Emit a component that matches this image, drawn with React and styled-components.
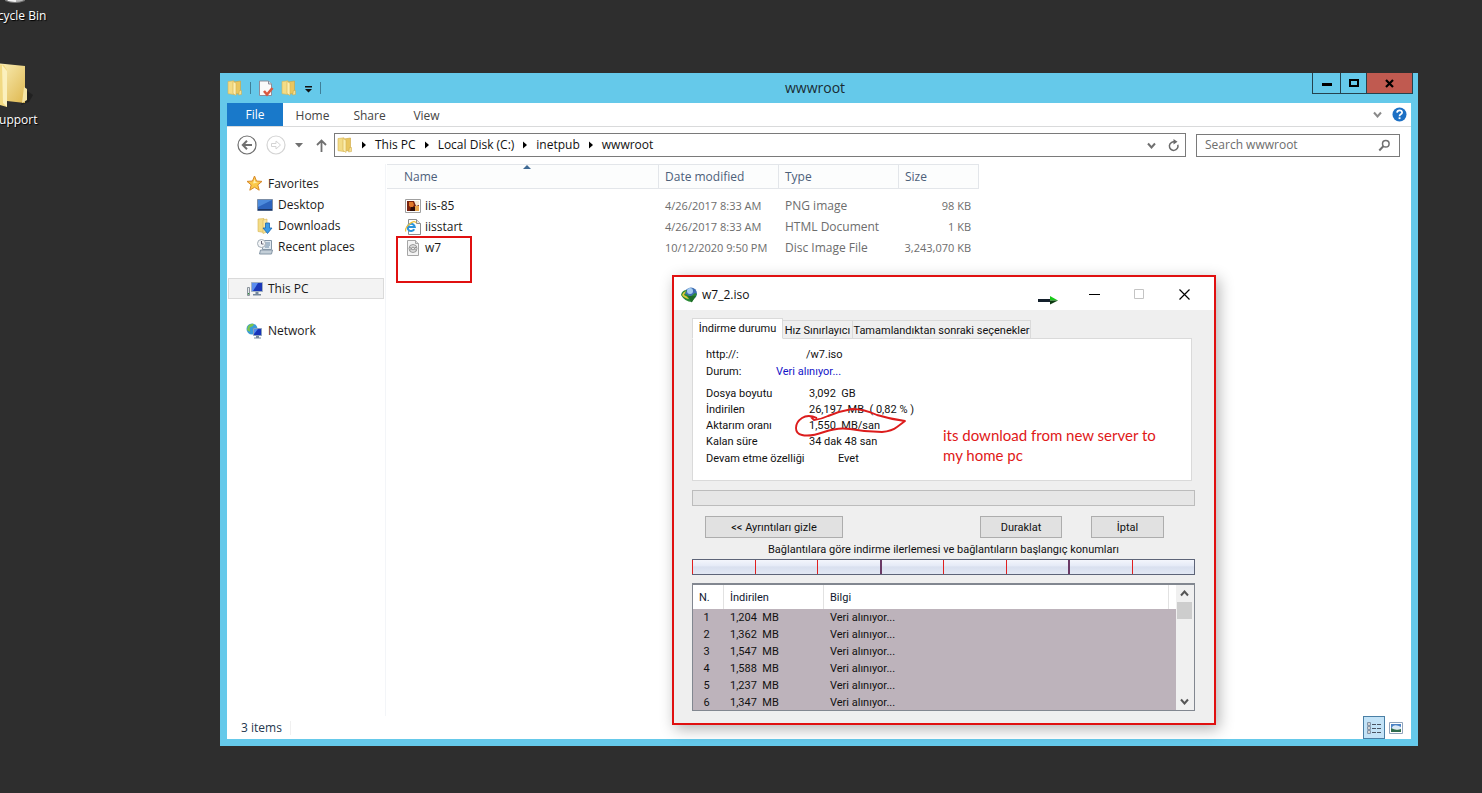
import React from "react";
import styled, { createGlobalStyle } from "styled-components";

const GlobalStyle = createGlobalStyle`
  * { box-sizing: border-box; }
  body { margin: 0; background: #2e2e2e; }
  button, input { font: inherit; color: inherit; }
  button { padding: 0; border: 0; background: none; }
  svg { display: block; flex: none; }
`;

const uiFont = `"Open Sans", "Noto Sans", sans-serif`;

/* ---------- desktop ---------- */

const Desktop = styled.main`
  position: relative;
  display: flex;
  min-height: 100vh;
  padding: 73px 64px 47px 220px;
  overflow: hidden;
  background: #2e2e2e;
  font: 12px/20px ${uiFont};
`;

const Shortcut = styled.div`
  position: absolute;
  left: -25px;
  top: ${(p) => p.$top}px;
  width: 80px;
  display: flex;
  flex-direction: column;
  align-items: center;
  color: #fff;
  white-space: nowrap;
  text-shadow: 1px 1px 1px #000;
`;

/* ---------- explorer ---------- */

const Explorer = styled.section`
  flex: 1;
  min-width: 0;
  display: flex;
  flex-direction: column;
  padding: 0 7px 7px;
  background: #65c9ea;
`;

const TitleBar = styled.header`
  display: grid;
  grid-template-columns: 1fr auto 1fr;
  height: 30px;
`;

const QuickTools = styled.div`
  display: flex;
  align-items: center;
  gap: 7px;
`;

const ToolButton = styled.button`
  display: flex;
  align-items: center;
  justify-content: center;
  height: 20px;
`;

const Divider = styled.span`
  width: 1px;
  height: 12px;
  background: #3f7f98;
`;

const WindowTitle = styled.h1`
  margin: 0;
  padding-right: 8px;
  font-size: 14px;
  font-weight: 400;
  line-height: 30px;
  color: #1a2c33;
`;

const Captions = styled.div`
  display: flex;
  justify-content: flex-end;
  margin-right: -2px;
`;

const Caption = styled.button`
  width: ${(p) => p.$width}px;
  height: 21px;
  margin-left: -1px;
  display: flex;
  align-items: center;
  justify-content: center;
  border: 1px solid #24424e;
  border-top: 0;
  background: ${(p) => (p.$close ? "#c05a50" : "transparent")};
`;

const Client = styled.div`
  flex: 1;
  display: flex;
  flex-direction: column;
  background: #fff;
`;

const Ribbon = styled.nav`
  display: flex;
  align-items: center;
  height: 24px;
  border-bottom: 1px solid #d9dadb;
`;

const RibbonTab = styled.button`
  width: ${(p) => (p.$file ? 56 : 57)}px;
  height: 23px;
  margin-right: ${(p) => (p.$file ? 1 : 0)}px;
  line-height: ${(p) => (p.$file ? 24 : 26)}px;
  color: ${(p) => (p.$file ? "#fff" : "#444")};
  background: ${(p) => (p.$file ? "#1979ca" : "transparent")};
`;

const RibbonEnd = styled.div`
  display: flex;
  align-items: center;
  gap: 10px;
  margin: 0 4px 0 auto;
`;

const AddressRow = styled.div`
  display: flex;
  align-items: center;
  height: 37px;
  padding: 0 11px 1px 10px;
`;

const NavButtons = styled.div`
  display: flex;
  align-items: center;
  gap: 9px;
  width: 90px;
  margin-right: 7px;

  & > :last-child { margin-left: auto; }
`;

const AddressBar = styled.div`
  flex: 1;
  display: flex;
  align-items: center;
  gap: 8px;
  height: 24px;
  padding: 0 5px 0 2px;
  border: 1px solid #7a7a7a;
  color: #111;
`;

const AddressEnd = styled.div`
  display: flex;
  align-items: center;
  gap: 11px;
  margin-left: auto;
`;

const SearchBox = styled.label`
  display: flex;
  align-items: center;
  width: 204px;
  height: 23px;
  margin-left: 10px;
  padding: 0 8px;
  border: 1px solid #7a7a7a;
`;

const SearchInput = styled.input`
  flex: 1;
  min-width: 0;
  padding: 0;
  border: 0;
  outline: 0;
  background: none;
  &::placeholder { color: #6d6d6d; opacity: 1; }
`;

const Body = styled.div`
  flex: 1;
  display: flex;
`;

const NavPane = styled.nav`
  width: 159px;
  padding: 9px 1px 0;
  border-right: 1px solid #f3f5f8;
`;

const NavItem = styled.a`
  display: flex;
  align-items: center;
  gap: 5px;
  height: 21px;
  margin-bottom: ${(p) => (p.$gap ? 21 : 0)}px;
  padding-left: ${(p) => (p.$child ? 29 : 18)}px;
  color: #1a1a1a;
  text-decoration: none;
  white-space: nowrap;
  background: ${(p) => (p.$selected ? "#f3f3f3" : "transparent")};
  box-shadow: ${(p) => (p.$selected ? "inset 0 0 0 1px #dadada" : "none")};
`;

const FileTable = styled.table`
  width: 592px;
  table-layout: fixed;
  border-collapse: separate;
  border-spacing: 0;
  align-self: flex-start;
  margin-left: 1px;
`;

const HeadCell = styled.th`
  position: relative;
  width: ${(p) => p.$width}px;
  height: 25px;
  padding: 0 0 0 ${(p) => p.$indent || 6}px;
  border: solid #e3e6ea;
  border-width: 1px 1px 1px 0;
  background: #fcfdfd;
  color: #4c607a;
  font-weight: 400;
  text-align: left;
`;

const SortMark = styled.svg`
  position: absolute;
  left: 50%;
  top: 0;
`;

const FileCell = styled.td`
  height: 21px;
  padding: 0 ${(p) => (p.$right ? 8 : 0)}px 0 ${(p) => (p.$right ? 0 : 6)}px;
  color: #6d6d6d;
  font-size: ${(p) => (p.$figures ? 11 : 12)}px;
  text-align: ${(p) => (p.$right ? "right" : "left")};
  white-space: nowrap;
`;

const Spacer = styled.td`
  height: 6px;
  padding: 0;
`;

const FileName = styled.a`
  display: flex;
  align-items: center;
  gap: 4px;
  padding-left: 12px;
  color: #1a1a1a;
  text-decoration: none;
`;

const StatusBar = styled.footer`
  display: flex;
  align-items: center;
  justify-content: space-between;
  height: 23px;
  padding: 0 8px 0 14px;
  color: #24384f;
`;

const ItemCount = styled.span`
  padding-right: 8px;
  line-height: 14px;
  border-right: 1px solid #f0f0f0;
`;

const ViewButtons = styled.div`
  display: flex;
  align-items: center;
  gap: 4px;
`;

const ViewButton = styled.button`
  display: flex;
  align-items: center;
  justify-content: center;
  width: ${(p) => (p.$on ? 22 : 14)}px;
  height: 23px;
  border: ${(p) => (p.$on ? "1px solid #4a7fa5" : "0")};
  background: ${(p) => (p.$on ? "#c3e3f7" : "transparent")};
`;

/* ---------- download dialog ---------- */

const Dialog = styled.section`
  position: absolute;
  left: 672px;
  top: 275px;
  width: 544px;
  border: 2px solid #e01010;
  background: #efefef;
  box-shadow: 3px 4px 14px rgba(0, 0, 0, 0.3);
  font: 11px/16px Roboto, "Noto Sans", sans-serif;
  color: #111;
`;

const DialogTitle = styled.header`
  display: flex;
  align-items: center;
  gap: 4px;
  height: 33px;
  padding: 2px 24px 0 7px;
  background: #fff;
  font: 12px/20px ${uiFont};
`;

const DialogName = styled.span`
  margin-right: auto;
`;

const DialogCaptions = styled.div`
  display: flex;
  align-items: center;
  gap: 34px;
  margin-left: 24px;
`;

const DialogBody = styled.div`
  padding: 8px 19px 12px 18px;
`;

const Tabs = styled.div`
  display: flex;
  align-items: flex-end;
  height: 21px;
  margin-bottom: -1px;
`;

const Tab = styled.button`
  width: ${(p) => p.$width}px;
  height: ${(p) => (p.$active ? 21 : 19)}px;
  padding-top: ${(p) => (p.$active ? 0 : 2)}px;
  border: 1px solid #dadada;
  border-bottom-color: ${(p) => (p.$active ? "#fff" : "#dadada")};
  border-left-width: ${(p) => (p.$active ? 1 : 0)}px;
  background: ${(p) => (p.$active ? "#fff" : "#efefef")};
  white-space: nowrap;
`;

const Panel = styled.div`
  display: flex;
  flex-direction: column;
  height: 143px;
  margin-right: 3px;
  padding: 7px 13px;
  border: 1px solid #dadada;
  background: #fff;
`;

const Info = styled.div`
  display: flex;
  align-items: center;
  height: ${(p) => (p.$tall ? 17 : 16)}px;
  margin-bottom: ${(p) => (p.$last ? 6 : 0)}px;
  white-space: pre;
`;

const InfoLabel = styled.span`
  width: ${(p) => p.$width || 103}px;
`;

const Status = styled.span`
  color: #1414c8;
`;

const Progress = styled.div`
  height: 16px;
  margin-top: 9px;
  border: 1px solid #bcbcbc;
  background: #e6e6e6;
`;

const Actions = styled.div`
  display: flex;
  margin: 10px 31px 0 13px;
`;

const Action = styled.button`
  width: ${(p) => p.$width}px;
  height: 22px;
  margin-left: ${(p) => p.$before || 0}px;
  padding-top: 2px;
  border: 1px solid #adadad;
  background: #e1e1e1;
`;

const SegmentTitle = styled.p`
  margin: 4px 0 1px;
  text-align: center;
`;

const Segments = styled.div`
  display: flex;
  height: 16px;
  border: 1px solid #5d6478;
  border-left: 0;
  background: linear-gradient(#f4f6fc, #e6ebf7 40%, #d9e0ef 50%, #e2e8f4);
`;

const Segment = styled.span`
  flex: 1;
  border-left: ${(p) => (p.$joined ? "2px solid #6b3a66" : "1px solid #e02020")};
`;

const ListBox = styled.div`
  display: flex;
  height: 128px;
  margin-top: 8px;
  border: 1px solid #828790;
  border-top-width: 2px;
  overflow: hidden;
  background: #fff;
`;

const ListView = styled.div`
  flex: 1;
  overflow: hidden;
`;

const ListTable = styled.table`
  width: 100%;
  table-layout: fixed;
  border-spacing: 0;
  background: #bdb3bb;
`;

const ListHead = styled.th`
  width: ${(p) => (p.$width ? p.$width + "px" : "auto")};
  height: 24px;
  padding: 2px 0 0 6px;
  border-right: ${(p) => (p.$end ? "0" : "1px solid #e2e2e2")};
  background: #fff;
  color: #101830;
  font-weight: 400;
  text-align: left;
`;

const ListCell = styled.td`
  height: 17px;
  padding: 1px 0 0 6px;
  white-space: pre;
`;

const NumberCell = styled(ListCell)`
  padding: 1px 4px 0 0;
  text-align: center;
`;

const ScrollBar = styled.div`
  display: flex;
  flex-direction: column;
  width: 18px;
  padding: 0 2px 0 1px;
  background: #f0f0f0;
`;

const ScrollButton = styled.button`
  display: flex;
  align-items: center;
  justify-content: center;
  height: 17px;
`;

const Thumb = styled.div`
  height: 17px;
  margin-bottom: auto;
  background: #cdcdcd;
`;

/* ---------- annotations ---------- */

const MarkBox = styled.div`
  position: absolute;
  left: 396px;
  top: 236px;
  width: 76px;
  height: 47px;
  border: 2px solid #e01010;
`;

const Scribble = styled.svg`
  position: absolute;
  left: 120px;
  top: 130px;
`;

const Note = styled.p`
  position: absolute;
  left: 269px;
  top: 148px;
  width: 230px;
  margin: 0;
  color: #e01818;
  font: 15px/20px Lato, sans-serif;
`;

/* ---------- icons ---------- */

const Folder = ({ size = 16 }) => (
  <svg width={size} height={size} viewBox="0 0 16 16">
    <path d="M1 1.500l6-.7v13.700l-6-.8z" fill="#f3dc86" stroke="#d6b452" strokeWidth=".6" />
    <path d="M7 2l6.500-1v12.500L7 14z" fill="#e9c65e" stroke="#cda63f" strokeWidth=".6" />
    <path d="M6 1.500l3 1.500v12.500l-3-2z" fill="#fbeeb0" stroke="#d6b452" strokeWidth=".6" />
    <path d="M12.500 10.500h2v4l-3 .5z" fill="#f4de93" stroke="#cda63f" strokeWidth=".5" />
  </svg>
);

const BigFolder = () => (
  <svg width="52" height="48" viewBox="13 0 52 48">
    <defs>
      <linearGradient id="fold" x1="0" y1="0" x2="1" y2="1">
        <stop offset="0" stopColor="#fbf1bd" />
        <stop offset="1" stopColor="#dfb84f" />
      </linearGradient>
    </defs>
    <path d="M50 28l7 5-4 7-8 3z" fill="#1c1c1c" opacity=".7" />
    <path d="M20 1l29 3v37l-18-2z" fill="url(#fold)" />
    <path d="M10 1l18 2 3 5v37L14 40z" fill="#f1d982" />
    <path d="M26 3l5 6v36l-4-4z" fill="#fbf0bd" />
    <path d="M48 25l3 2v11l-5 3z" fill="#f5e5a5" />
  </svg>
);

const Bin = () => (
  <svg width="30" height="12" viewBox="0 0 30 12">
    <path d="M3 0h24l-2 6q-10 5-20 0z" fill="#b9b9b9" />
    <path d="M8 0h8v8q-5 0-8-1z" fill="#f1f1f1" />
    <path d="M5 6q10 4 20 0v1q-10 4-20 0z" fill="#777" />
  </svg>
);

const Properties = () => (
  <svg width="16" height="17" viewBox="0 0 16 17">
    <path d="M1.500 1h9l3 3v11.500h-12z" fill="#fafafa" stroke="#8d8d9a" />
    <path d="M10.500 1v3h3" fill="#ddd" stroke="#8d8d9a" />
    <path d="M6 11l3 3.500L14.500 8" fill="none" stroke="#d9583f" strokeWidth="2.600" />
  </svg>
);

const Chevron = ({ up, color = "#555", w = 9 }) => (
  <svg width={w} height="7" viewBox="0 0 9 7">
    <path d={up ? "M1 5.500l3.500-4 3.500 4" : "M1 1.500l3.500 4 3.500-4"} fill="none" stroke={color} strokeWidth="2" />
  </svg>
);

const Crumb = () => (
  <svg width="6" height="8" viewBox="0 0 6 8">
    <path d="M1 .5v7L5 4z" fill="#000" />
  </svg>
);

const RoundArrow = ({ forward }) => {
  const c = forward ? "#d4d4d4" : "#707070";
  return (
    <svg width="20" height="20" viewBox="0 0 20 20">
      <circle cx="10" cy="10" r="9" fill="#fff" stroke={c} strokeWidth="1.200" />
      {forward ? (
        <path d="M5.500 8.500H10V6l4.500 4-4.500 4v-2.500H5.500z" fill="none" stroke={c} />
      ) : (
        <path d="M15 10H6m4-4.200L5.800 10l4.200 4.200" fill="none" stroke={c} strokeWidth="2" />
      )}
    </svg>
  );
};

const UpArrow = () => (
  <svg width="11" height="13" viewBox="0 0 11 13">
    <path d="M5.500 13V2M1 6l4.500-4.500L10 6" fill="none" stroke="#707070" strokeWidth="1.800" />
  </svg>
);

const Help = () => (
  <svg width="15" height="15" viewBox="0 0 15 15">
    <circle cx="7.500" cy="7.500" r="7" fill="#1d70c4" />
    <path d="M5 5.600q.2-2.300 2.600-2.300t2.500 2.100q0 1.100-1.300 1.900T7.500 9.200" fill="none" stroke="#fff" strokeWidth="1.700" />
    <path d="M6.600 10.300h1.900v1.800H6.600z" fill="#fff" />
  </svg>
);

const Refresh = () => (
  <svg width="13" height="13" viewBox="0 0 13 13">
    <path d="M10.800 5.800A4.300 4.300 0 1 1 8 3" fill="none" stroke="#6a6a6a" strokeWidth="1.500" />
    <path d="M6.500 0l4 2.800-4 2.700z" fill="#6a6a6a" />
  </svg>
);

const Magnifier = () => (
  <svg width="13" height="13" viewBox="0 0 13 13">
    <circle cx="7.800" cy="4.800" r="3.300" fill="none" stroke="#707070" strokeWidth="1.500" />
    <path d="M5.300 7.300L1.300 11.500" stroke="#707070" strokeWidth="2" />
  </svg>
);

const Star = () => (
  <svg width="17" height="17" viewBox="0 0 17 17">
    <path d="M8.500 1l2 5 5.500.4-4.200 3.500 1.400 5.300-4.700-2.900-4.700 2.900 1.400-5.300L1 6.400 6.500 6z" fill="#fbc94a" stroke="#d88a2a" />
    <path d="M8.500 4l1 3 2.500.5-5 1z" fill="#fff0b0" />
  </svg>
);

const DesktopIcon = () => (
  <svg width="16" height="16" viewBox="0 0 16 16">
    <path d="M.5 2.500h15v11H.5z" fill="#2d64bd" stroke="#7b8da6" />
    <path d="M1 3h14L1 10z" fill="#4d8bdc" />
    <path d="M1 12h14v1.500H1z" fill="#1b3566" />
  </svg>
);

const Downloads = () => (
  <svg width="16" height="16" viewBox="0 0 16 16">
    <path d="M1 1l6-.5v14l-6-1z" fill="#f3dc86" stroke="#d6b452" strokeWidth=".6" />
    <path d="M6 2l4-1v13l-4 1.500z" fill="#f8e69f" stroke="#d6b452" strokeWidth=".6" />
    <path d="M8.500 5h4v5H15l-4.500 5.500L6 10h2.500z" fill="#3b9be6" stroke="#1b66b0" strokeWidth=".8" />
  </svg>
);

const Recent = () => (
  <svg width="16" height="16" viewBox="0 0 16 16">
    <path d="M5.500 1.500h9v9h-9z" fill="#dfe8f0" stroke="#8596a6" />
    <path d="M8 4h5M8 6h5M8 8h4" stroke="#6f8ba6" />
    <path d="M3.500 11h12l-1 4h-12z" fill="#c4cfd8" stroke="#8596a6" />
    <circle cx="4.500" cy="4.500" r="4" fill="#f3f5f7" stroke="#a3adb6" />
    <path d="M4.500 2v3h2" fill="none" stroke="#667" />
  </svg>
);

const Monitor = ({ network }) => (
  <svg width="17" height="16" viewBox="0 0 17 16">
    {network ? (
      <>
        <circle cx="6" cy="6" r="5.500" fill="#3a9bd9" />
        <path d="M2 3q3-3 6-2-1 3-3 3t-1 3-3 0z" fill="#7cc64c" />
        <path d="M7.500 5.500h8v7h-8z" fill="#1733b8" stroke="#8aa0bb" />
        <path d="M8 6h4l-4 5z" fill="#4f8df0" />
        <path d="M10 13h3v1.500h2v1H8v-1h2z" fill="#75889c" />
      </>
    ) : (
      <>
        <path d="M1.500 6.500h2v8h-2z" fill="#e4e7ea" stroke="#8b949c" />
        <path d="M2 12h1v1.500H2z" fill="#2f8f3a" />
        <path d="M5.500 1.500h11v9h-11z" fill="#1b38b8" stroke="#a0b0c2" />
        <path d="M6 2h6L7 10H6z" fill="#5b8df0" />
        <path d="M9.500 11h3v2H15v1.500H7V13h2.500z" fill="#75889c" />
      </>
    )}
  </svg>
);

const PngIcon = () => (
  <svg width="16" height="16" viewBox="0 0 16 16">
    <path d="M.5 1.500h15v13H.5z" fill="#fff" stroke="#a0a0a0" />
    <path d="M2 3h12v10H2z" fill="#7a2410" />
    <path d="M4 4h4l1 3-2 3-3-2z" fill="#e0782a" />
    <path d="M10 8h4v5h-4z" fill="#e8a850" />
    <path d="M9 3h5v4l-3 1z" fill="#f4ead8" />
    <path d="M6 9h4v4H5z" fill="#2c0c08" />
  </svg>
);

const IeIcon = () => (
  <svg width="16" height="16" viewBox="0 0 16 16">
    <path d="M3.500.5h8l4 4v11h-12z" fill="#fcfcfc" stroke="#8e8e8e" />
    <path d="M11.500.5v4h4" fill="#e6e6e6" stroke="#8e8e8e" />
    <path d="M9.300 10.300A3.600 3.600 0 1 1 9.800 8H3.500" fill="none" stroke="#2a93dc" strokeWidth="2" />
    <path d="M.8 12.500Q-.5 9 4.500 5T11 3.800" fill="none" stroke="#efc03a" strokeWidth="1.300" />
  </svg>
);

const DiscIcon = () => (
  <svg width="16" height="16" viewBox="0 0 16 16">
    <path d="M2.500.5h8l3 3v12h-11z" fill="#f4f4f4" stroke="#a6a6a6" />
    <path d="M10.500.5v3h3" fill="#ddd" stroke="#a6a6a6" />
    <circle cx="8" cy="8.500" r="4" fill="#dcdcdc" stroke="#9a9a9a" />
    <path d="M4.500 7.500L7 8.500l-2 2M11.500 7L9 8.500l2 2" fill="none" stroke="#888" />
    <circle cx="8" cy="8.500" r="1.300" fill="#fff" stroke="#777" strokeWidth=".7" />
  </svg>
);

const DetailsIcon = () => (
  <svg width="16" height="14" viewBox="0 0 16 14">
    <path d="M1.500 1.500h3v3h-3zM1.500 5.500h3v3h-3zM1.500 9.500h3v3h-3z" fill="#fff" stroke="#8294a8" />
    <path d="M2.500 3h1M2.500 7h1M2.500 11h1" stroke="#444" />
    <path d="M6 3.500h4M11 3.500h4M6 7.500h4M11 7.500h4M6 11.500h4M11 11.500h4" stroke="#4b5563" />
  </svg>
);

const ThumbIcon = () => (
  <svg width="14" height="12" viewBox="0 0 14 12">
    <path d="M.5.5h13v11H.5z" fill="#fff" stroke="#8fa3bb" />
    <path d="M2 2h10v4H2z" fill="#4b82c4" />
    <path d="M4 4q3-2 8 1v2H2z" fill="#dbe9f5" />
    <path d="M2 6q5 3 10 1v3H2z" fill="#2f6d4f" />
  </svg>
);

const IdmIcon = () => (
  <svg width="17" height="16" viewBox="0 0 17 16">
    <circle cx="10" cy="6.500" r="6" fill="#3f6fb4" />
    <circle cx="9" cy="4" r="3" fill="#a8cdf0" />
    <path d="M0 8Q1 3 6 3L4 7q3 0 5 3l5-4 2 1-5 8q-7 0-11-7z" fill="#2a8a35" />
    <path d="M1 8q1-3 4-4L3 8q3 1 5 4-5-1-7-4z" fill="#e3c83a" />
    <path d="M7 9h8l-4.500 6.500z" fill="#1f6d2a" />
  </svg>
);

const GreenArrow = () => (
  <svg width="23" height="22" viewBox="0 0 23 22">
    <path d="M0 15h12v3H0z" fill="#14202c" />
    <path d="M12 12l8 4.500H12z" fill="#18c818" />
    <path d="M12 16.500h8l-8 4z" fill="#0c3a10" />
  </svg>
);

/* ---------- data ---------- */

const files = [
  { name: "iis-85", date: "4/26/2017 8:33 AM", type: "PNG image", size: "98 KB", Icon: PngIcon },
  { name: "iisstart", date: "4/26/2017 8:33 AM", type: "HTML Document", size: "1 KB", Icon: IeIcon },
  { name: "w7", date: "10/12/2020 9:50 PM", type: "Disc Image File", size: "3,243,070 KB", Icon: DiscIcon },
];

const connections = ["1,204", "1,362", "1,547", "1,588", "1,237", "1,347"];
const path = ["This PC", "Local Disk (C:)", "inetpub", "wwwroot"];

/* ---------- parts ---------- */

function ExplorerWindow() {
  return (
    <Explorer>
      <TitleBar>
        <QuickTools>
          <Folder />
          <Divider />
          <ToolButton aria-label="Properties"><Properties /></ToolButton>
          <ToolButton aria-label="New folder"><Folder /></ToolButton>
          <ToolButton aria-label="Customize">
            <svg width="9" height="9" viewBox="0 0 9 9">
              <path d="M1 2h7v1.500H1zM1 5h7L4.500 8.500z" fill="#111" />
            </svg>
          </ToolButton>
          <Divider />
        </QuickTools>
        <WindowTitle>wwwroot</WindowTitle>
        <Captions>
          <Caption $width={29} aria-label="Minimize">
            <svg width="10" height="10"><path d="M0 5h10v3H0z" fill="#000" /></svg>
          </Caption>
          <Caption $width={27} aria-label="Maximize">
            <svg width="10" height="10"><path d="M1 2h8v6H1z" fill="none" stroke="#000" strokeWidth="2" /></svg>
          </Caption>
          <Caption $width={47} $close aria-label="Close">
            <svg width="9" height="9"><path d="M1 1l7 7M8 1L1 8" stroke="#000" strokeWidth="2.200" /></svg>
          </Caption>
        </Captions>
      </TitleBar>
      <Client>
        <Ribbon>
          <RibbonTab $file>File</RibbonTab>
          <RibbonTab>Home</RibbonTab>
          <RibbonTab>Share</RibbonTab>
          <RibbonTab>View</RibbonTab>
          <RibbonEnd>
            <ToolButton aria-label="Expand ribbon"><Chevron color="#8a8a8a" /></ToolButton>
            <ToolButton aria-label="Help"><Help /></ToolButton>
          </RibbonEnd>
        </Ribbon>
        <AddressRow>
          <NavButtons>
            <ToolButton aria-label="Back"><RoundArrow /></ToolButton>
            <ToolButton aria-label="Forward"><RoundArrow forward /></ToolButton>
            <ToolButton aria-label="Recent locations">
              <svg width="8" height="5"><path d="M0 0h8L4 4.500z" fill="#707070" /></svg>
            </ToolButton>
            <ToolButton aria-label="Up"><UpArrow /></ToolButton>
          </NavButtons>
          <AddressBar>
            <Folder />
            {path.map((part) => (
              <React.Fragment key={part}>
                <Crumb />
                <ToolButton>{part}</ToolButton>
              </React.Fragment>
            ))}
            <AddressEnd>
              <ToolButton aria-label="Previous locations"><Chevron color="#707070" /></ToolButton>
              <ToolButton aria-label="Refresh"><Refresh /></ToolButton>
            </AddressEnd>
          </AddressBar>
          <SearchBox>
            <SearchInput type="text" placeholder="Search wwwroot" aria-label="Search wwwroot" />
            <Magnifier />
          </SearchBox>
        </AddressRow>
        <Body>
          <NavPane>
            <NavItem href="#favorites"><Star />Favorites</NavItem>
            <NavItem href="#desktop" $child><DesktopIcon />Desktop</NavItem>
            <NavItem href="#downloads" $child><Downloads />Downloads</NavItem>
            <NavItem href="#recent" $child $gap><Recent />Recent places</NavItem>
            <NavItem href="#pc" $selected $gap><Monitor />This PC</NavItem>
            <NavItem href="#network"><Monitor network />Network</NavItem>
          </NavPane>
          <FileTable>
            <thead>
              <tr>
                <HeadCell $width={272} $indent={17}>
                  Name
                  <SortMark width="8" height="4"><path d="M0 4l4-4 4 4z" fill="#3f6a94" /></SortMark>
                </HeadCell>
                <HeadCell $width={120}>Date modified</HeadCell>
                <HeadCell $width={120}>Type</HeadCell>
                <HeadCell $width={80}>Size</HeadCell>
              </tr>
            </thead>
            <tbody>
              <tr><Spacer colSpan={4} /></tr>
              {files.map(({ name, date, type, size, Icon }) => (
                <tr key={name}>
                  <FileCell><FileName href={"#" + name}><Icon />{name}</FileName></FileCell>
                  <FileCell $figures>{date}</FileCell>
                  <FileCell>{type}</FileCell>
                  <FileCell $figures $right>{size}</FileCell>
                </tr>
              ))}
            </tbody>
          </FileTable>
        </Body>
        <StatusBar>
          <ItemCount>3 items</ItemCount>
          <ViewButtons>
            <ViewButton $on aria-label="Details"><DetailsIcon /></ViewButton>
            <ViewButton aria-label="Large icons"><ThumbIcon /></ViewButton>
          </ViewButtons>
        </StatusBar>
      </Client>
    </Explorer>
  );
}

function DownloadDialog() {
  return (
    <Dialog>
      <DialogTitle>
        <IdmIcon />
        <DialogName>w7_2.iso</DialogName>
        <GreenArrow />
        <DialogCaptions>
          <ToolButton aria-label="Minimize">
            <svg width="11" height="11"><path d="M0 5h11v1H0z" fill="#000" /></svg>
          </ToolButton>
          <ToolButton aria-label="Maximize" disabled>
            <svg width="11" height="11"><path d="M.5.5h9v9h-9z" fill="none" stroke="#c4c4c4" /></svg>
          </ToolButton>
          <ToolButton aria-label="Close">
            <svg width="11" height="11"><path d="M.5.5l10 10M10.500.5l-10 10" stroke="#000" strokeWidth="1.200" /></svg>
          </ToolButton>
        </DialogCaptions>
      </DialogTitle>
      <DialogBody>
        <Tabs>
          <Tab $width={91} $active>İndirme durumu</Tab>
          <Tab $width={70}>Hız Sınırlayıcı</Tab>
          <Tab $width={178}>Tamamlandıktan sonraki seçenekler</Tab>
        </Tabs>
        <Panel>
          <Info $tall><InfoLabel $width={100}>http://:</InfoLabel>/w7.iso</Info>
          <Info $tall $last><InfoLabel $width={70}>Durum:</InfoLabel><Status>Veri alınıyor...</Status></Info>
          <Info><InfoLabel>Dosya boyutu</InfoLabel>{"3,092  GB"}</Info>
          <Info><InfoLabel>İndirilen</InfoLabel>{"26,197  MB  ( 0,82 % )"}</Info>
          <Info><InfoLabel>Aktarım oranı</InfoLabel>{"1,550  MB/san"}</Info>
          <Info><InfoLabel>Kalan süre</InfoLabel>34 dak 48 san</Info>
          <Info $tall><InfoLabel $width={132}>Devam etme özelliği</InfoLabel>Evet</Info>
        </Panel>
        <Progress role="progressbar" aria-label="İndirme" />
        <Actions>
          <Action $width={138}>&lt;&lt; Ayrıntıları gizle</Action>
          <Action $width={82} $before={137}>Duraklat</Action>
          <Action $width={73} $before={29}>İptal</Action>
        </Actions>
        <SegmentTitle>Bağlantılara göre indirme ilerlemesi ve bağlantıların başlangıç konumları</SegmentTitle>
        <Segments>
          {[0, 1, 2, 3, 4, 5, 6, 7].map((n) => <Segment key={n} $joined={n === 3 || n === 6} />)}
        </Segments>
        <ListBox>
          <ListView>
            <ListTable>
              <thead>
                <tr>
                  <ListHead $width={31}>N.</ListHead>
                  <ListHead $width={100}>İndirilen</ListHead>
                  <ListHead>Bilgi</ListHead>
                  <ListHead $width={7} $end aria-hidden="true" />
                </tr>
              </thead>
              <tbody>
                {connections.map((amount, i) => (
                  <tr key={amount}>
                    <NumberCell>{i + 1}</NumberCell>
                    <ListCell>{amount + "  MB"}</ListCell>
                    <ListCell colSpan={2}>Veri alınıyor...</ListCell>
                  </tr>
                ))}
              </tbody>
            </ListTable>
          </ListView>
          <ScrollBar>
            <ScrollButton aria-label="Scroll up"><Chevron up /></ScrollButton>
            <Thumb />
            <ScrollButton aria-label="Scroll down"><Chevron /></ScrollButton>
          </ScrollBar>
        </ListBox>
      </DialogBody>
      <Scribble width="116" height="36" viewBox="0 0 116 36">
        <path
          d="M23 11Q14 7 8 11Q2 15 2 21Q2 27 8 28Q16 30 30 25Q44 20 56 22Q72 25 88 25Q98 24 103 20L111 14Q96 12 83 8Q70 2 58 2Q46 4 34 9Q28 12 20 13L17 10"
          fill="none"
          stroke="#dc1c1c"
          strokeWidth="1.900"
          strokeLinejoin="round"
        />
      </Scribble>
      <Note>its download from new server to my home pc</Note>
    </Dialog>
  );
}

export default function App() {
  return (
    <>
      <GlobalStyle />
      <Desktop>
        <Shortcut $top={-6}><Bin /><span>Recycle Bin</span></Shortcut>
        <Shortcut $top={62}><BigFolder /><span>Support</span></Shortcut>
        <ExplorerWindow />
        <MarkBox />
        <DownloadDialog />
      </Desktop>
    </>
  );
}
